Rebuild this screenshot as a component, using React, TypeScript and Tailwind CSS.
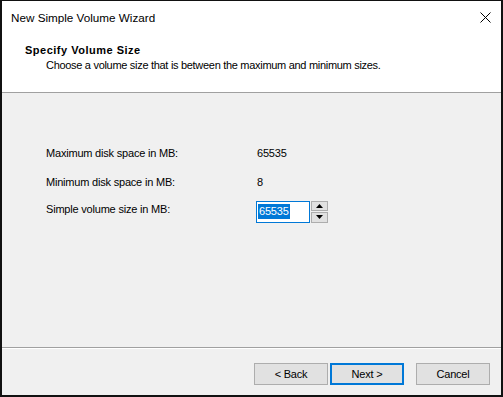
import React from "react";

const sans = { fontFamily: '"Liberation Sans", Arial, sans-serif' };

function SpinBox() {
  return (
    <div className="flex h-[22px] items-stretch">
      <div className="flex w-[54px] items-center border border-[#0078d7] bg-white pl-[1px]">
        <span className="bg-[#0078d7] pl-[1px] pr-[1px] leading-[15px] text-white">65535</span>
      </div>
      <div className="ml-[1px] flex w-[17px] flex-col gap-[1px]">
        <button className="flex flex-1 items-center justify-center border border-[#adadad] bg-[#e1e1e1]">
          <svg width="7" height="4" viewBox="0 0 7 4">
            <path d="M0 4 L3.5 0 L7 4 Z" fill="#000" />
          </svg>
        </button>
        <button className="flex flex-1 items-center justify-center border border-[#adadad] bg-[#e1e1e1]">
          <svg width="7" height="4" viewBox="0 0 7 4">
            <path d="M0 0 L3.5 4 L7 0 Z" fill="#000" />
          </svg>
        </button>
      </div>
    </div>
  );
}

function WizardButton({ label, primary }: { label: string; primary?: boolean }) {
  return (
    <button
      className={
        primary
          ? "h-[22px] w-[74px] border-2 border-[#0078d7] bg-[#e1e1e1] text-[11px] text-black"
          : "h-[22px] w-[74px] border border-[#adadad] bg-[#e1e1e1] text-[11px] text-black"
      }
    >
      {label}
    </button>
  );
}

export default function App() {
  return (
    <div
      className="flex h-[397px] w-[503px] flex-col border-2 border-t border-[#111] bg-[#f0f0f0] text-[11px] tracking-[-0.2px] text-black"
      style={sans}
    >
      {/* title + header */}
      <div className="h-[92px] border-b border-[#a0a0a0] bg-white">
        <div className="flex h-[33px] items-center justify-between pl-[9px] pr-[10px]">
          <span className="text-[11.7px] tracking-normal">New Simple Volume Wizard</span>
          <svg width="11" height="11" viewBox="0 0 11 11">
            <path d="M0.5 0.5 L10.5 10.5 M10.5 0.5 L0.5 10.5" stroke="#000" strokeWidth="1" />
          </svg>
        </div>
        <div className="pl-[23px] pt-[9px] font-bold tracking-[0.5px] leading-[15px]">Specify Volume Size</div>
        <div className="pl-[44px] leading-[15px] tracking-[-0.3px]">
          Choose a volume size that is between the maximum and minimum sizes.
        </div>
      </div>

      {/* body */}
      <div className="flex flex-1 flex-col pl-[44px] pt-[46px]">
        <div className="flex h-[29px] items-center">
          <span className="w-[210px]">Maximum disk space in MB:</span>
          <span className="pl-[1px]">65535</span>
        </div>
        <div className="flex h-[29px] items-center">
          <span className="w-[210px]">Minimum disk space in MB:</span>
          <span className="pl-[1px]">8</span>
        </div>
        <div className="flex h-[29px] items-center">
          <span className="w-[210px] -mt-[5px]">Simple volume size in MB:</span>
          <SpinBox />
        </div>
      </div>

      {/* footer */}
      <div className="border-t border-[#a0a0a0]">
        <div className="flex h-[47px] items-start border-t border-white pl-[252px] pt-[14px]">
          <WizardButton label="< Back" />
          <div className="ml-[2px]">
            <WizardButton label="Next >" primary />
          </div>
          <div className="ml-[12px]">
            <WizardButton label="Cancel" />
          </div>
        </div>
      </div>
    </div>
  );
}
